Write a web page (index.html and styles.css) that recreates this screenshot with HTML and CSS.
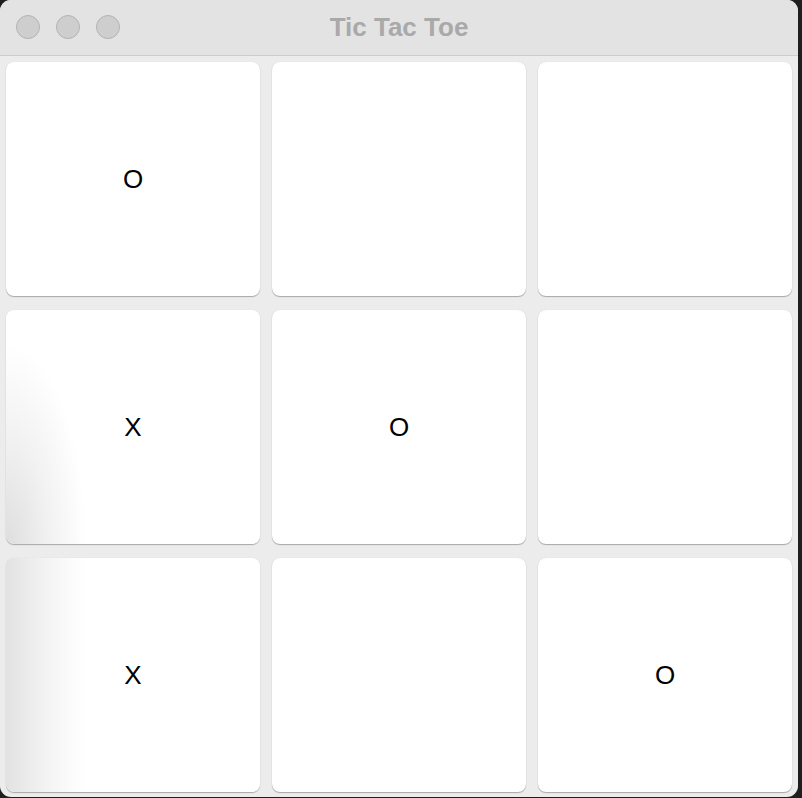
FILE: index.html
```html
<html>
<head>
    <title>Tic Tac Toe</title>
    <link rel="stylesheet" href="styles.css">
    <meta charset="UTF-8" />
</head>
<body>
<div class="window">
    <div class="titlebar">
        <div class="lights">
            <span class="light"></span>
            <span class="light"></span>
            <span class="light"></span>
        </div>
        <div class="title">Tic Tac Toe</div>
    </div>
    <div class="board">
        <div class="cell">O</div>
        <div class="cell"></div>
        <div class="cell"></div>
        <div class="cell shade_low">X</div>
        <div class="cell">O</div>
        <div class="cell"></div>
        <div class="cell shade_full">X</div>
        <div class="cell"></div>
        <div class="cell">O</div>
    </div>
</div>
</body>
</html>
```

FILE: styles.css
```css
html, body {
margin: 0;
padding: 0;
background-color: #1e1e1e;
width: 802px;
height: 798px;
overflow: hidden;
}

.window {
width: 798px;
height: 797px;
background-color: #ececec;
border-radius: 11px;
overflow: hidden;
display: flex;
flex-direction: column;
font-family: "Liberation Sans", Arial, sans-serif;
}

.titlebar {
height: 55px;
background-color: #e3e3e3;
border-bottom: 1px solid #cdcdcd;
display: flex;
align-items: center;
justify-content: center;
position: relative;
flex-shrink: 0;
}

.lights {
position: absolute;
left: 16px;
top: 15px;
display: flex;
gap: 16px;
}

.light {
width: 22px;
height: 22px;
border-radius: 50%;
background-color: #cecece;
border: 1px solid #b3b3b3;
}

.title {
font-size: 26px;
font-weight: bold;
color: #a9a9a9;
margin-top: -1px;
}

.board {
flex: 1;
display: grid;
grid-template-columns: repeat(3, 254px);
grid-template-rows: repeat(3, 234px);
column-gap: 12px;
row-gap: 14px;
padding: 6px 6px 0 6px;
}

.cell {
background-color: white;
border-radius: 8px;
box-shadow: 0 1px 1px rgba(0, 0, 0, 0.28), 0 0 1px rgba(0, 0, 0, 0.12);
display: flex;
align-items: center;
justify-content: center;
font-size: 26px;
color: black;
}

.shade_low {
background: radial-gradient(ellipse 80px 200px at 0px 234px, #dedede 0%, #f2f2f2 55%, white 100%);
}

.shade_full {
background: linear-gradient(to right, #e2e2e2 0px, #f1f1f1 35px, #fbfbfb 65px, white 80px);
}
```
